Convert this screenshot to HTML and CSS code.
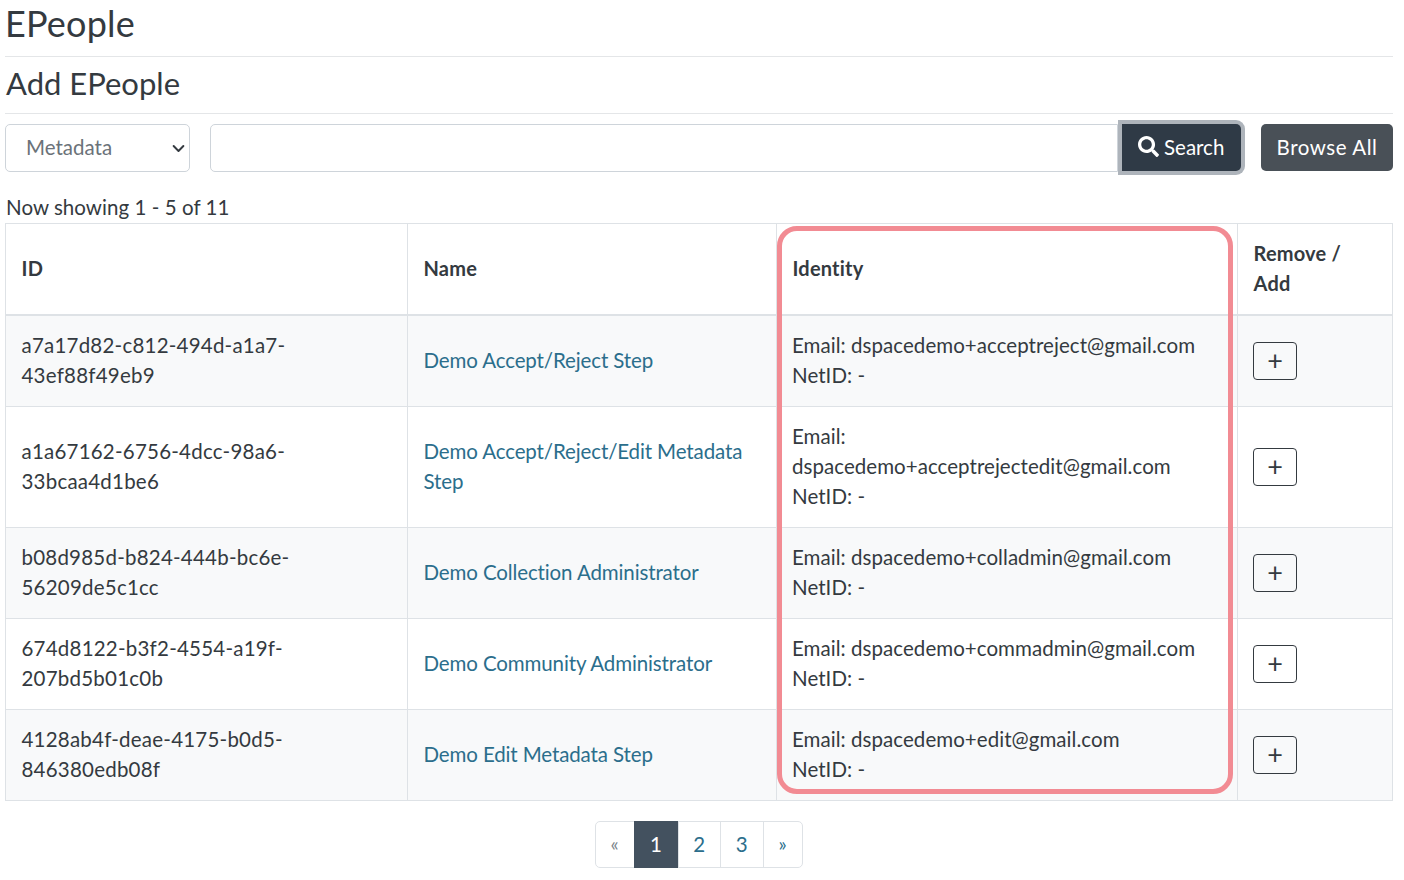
FILE: index.html
```html
<!DOCTYPE html>
<html lang="en">
<head>
<meta charset="utf-8">
<title>EPeople</title>
<link rel="stylesheet" href="styles.css">
</head>
<body>
<main class="page">
  <h1 class="title">EPeople</h1>
  <h2 class="subtitle">Add EPeople</h2>
  <form class="search">
    <div class="select"><span>Metadata</span>
      <svg class="chev" viewBox="0 0 16 16" width="13" height="13"><path d="M2 5l6 6 6-6" fill="none" stroke="#343a40" stroke-width="2.4" stroke-linecap="round" stroke-linejoin="round"/></svg>
    </div>
    <div class="group">
      <div class="input"></div>
      <button type="button" class="btn btn-search">
        <svg viewBox="0 0 512 512" width="21" height="21"><path fill="#fff" d="M505 442.700L405.300 343c-4.500-4.500-10.600-7-17-7H372c27.600-35.300 44-79.700 44-128C416 93.100 322.900 0 208 0S0 93.100 0 208s93.100 208 208 208c48.300 0 92.700-16.400 128-44v16.300c0 6.400 2.500 12.500 7 17l99.700 99.700c9.400 9.400 24.600 9.400 33.900 0l28.300-28.300c9.400-9.400 9.400-24.600.1-34zM208 336c-70.700 0-128-57.200-128-128 0-70.700 57.200-128 128-128 70.700 0 128 57.200 128 128 0 70.700-57.200 128-128 128z"/></svg>
        <span>Search</span>
      </button>
    </div>
    <button type="button" class="btn btn-browse"><span class="btn-label">Browse All</span></button>
  </form>
  <p class="count">Now showing 1 - 5 of 11</p>
  <div class="table-wrap">
    <table class="people">
      <colgroup><col class="c1"><col class="c2"><col class="c3"><col class="c4"></colgroup>
      <thead>
        <tr><th>ID</th><th>Name</th><th>Identity</th><th>Remove /<br>Add</th></tr>
      </thead>
      <tbody>
        <tr>
          <td class="uuid">a7a17d82-c812-494d-a1a7-<br>43ef88f49eb9</td>
          <td><a href="#">Demo Accept/Reject Step</a></td>
          <td class="identity">Email: dspacedemo+acceptreject@gmail.com<br>NetID: -</td>
          <td class="action"><button type="button" class="add">+</button></td>
        </tr>
        <tr>
          <td class="uuid">a1a67162-6756-4dcc-98a6-<br>33bcaa4d1be6</td>
          <td><a href="#">Demo Accept/Reject/Edit Metadata<br>Step</a></td>
          <td class="identity">Email:<br>dspacedemo+acceptrejectedit@gmail.com<br>NetID: -</td>
          <td class="action"><button type="button" class="add">+</button></td>
        </tr>
        <tr>
          <td class="uuid">b08d985d-b824-444b-bc6e-<br>56209de5c1cc</td>
          <td><a href="#">Demo Collection Administrator</a></td>
          <td class="identity">Email: dspacedemo+colladmin@gmail.com<br>NetID: -</td>
          <td class="action"><button type="button" class="add">+</button></td>
        </tr>
        <tr>
          <td class="uuid">674d8122-b3f2-4554-a19f-<br>207bd5b01c0b</td>
          <td><a href="#">Demo Community Administrator</a></td>
          <td class="identity">Email: dspacedemo+commadmin@gmail.com<br>NetID: -</td>
          <td class="action"><button type="button" class="add">+</button></td>
        </tr>
        <tr>
          <td class="uuid">4128ab4f-deae-4175-b0d5-<br>846380edb08f</td>
          <td><a href="#">Demo Edit Metadata Step</a></td>
          <td class="identity">Email: dspacedemo+edit@gmail.com<br>NetID: -</td>
          <td class="action"><button type="button" class="add">+</button></td>
        </tr>
      </tbody>
    </table>
    <div class="highlight"></div>
  </div>
  <nav class="pager">
    <a class="pg pg-edge" href="#">«</a>
    <a class="pg pg-active" href="#">1</a>
    <a class="pg pg-num" href="#">2</a>
    <a class="pg pg-num" href="#">3</a>
    <a class="pg pg-edge" href="#">»</a>
  </nav>
</main>
</body>
</html>
```
FILE: styles.css
```css
* { box-sizing: border-box; }
html, body { margin: 0; padding: 0; }
body {
  background: #fff;
  color: #343a40;
  font-family: Lato, "Noto Sans", sans-serif;
  font-size: 20.5px;
  line-height: 30px;
  overflow: hidden;
}
.page { width: 1393px; padding-left: 5px; }
.title {
  margin: 0;
  height: 57px;
  border-bottom: 1px solid #e4e6e8;
  font-size: 36px;
  font-weight: 400;
  line-height: 46px;
  letter-spacing: 0.2px;
}
.subtitle {
  margin: 0;
  height: 57px;
  padding: 5px 0 0 1px;
  border-bottom: 1px solid #e4e6e8;
  font-size: 31px;
  font-weight: 400;
  line-height: 42px;
}
.search { display: flex; align-items: flex-start; margin-top: 10px; }
.select {
  display: flex;
  align-items: center;
  justify-content: space-between;
  width: 185px;
  height: 48px;
  padding: 0 4px 2px 20px;
  border: 1px solid #ced4da;
  border-radius: 5px;
  color: #6b7279;
}
.chev { margin-top: 2px; }
.group { display: flex; flex: 1; margin-left: 20px; }
.input {
  flex: 1;
  height: 48px;
  border: 1px solid #ced4da;
  border-radius: 5px 0 0 5px;
}
.btn {
  height: 47px;
  border: 0;
  border-radius: 5px;
  color: #fff;
  font: inherit;
  white-space: nowrap;
}
.btn-label { position: relative; top: -1px; }
.btn-search {
  display: flex;
  align-items: center;
  gap: 5px;
  width: 119px;
  margin: 0 0 0 4px;
  padding: 0 0 2px 16px;
  background: #2f3a46;
  border-radius: 0 5px 5px 0;
  box-shadow: 0 0 0 4px #aeb4bb;
}
.btn-browse { width: 132px; margin-left: 20px; background: #495057; letter-spacing: 0.55px; }
.count { margin: 20px 0 0; height: 30px; padding-left: 1px; letter-spacing: 0.05px; }
.table-wrap { position: relative; margin-top: 1px; }
.people {
  width: 1388px;
  table-layout: fixed;
  border-collapse: collapse;
  border: 1px solid #dee2e6;
}
.c1 { width: 402px; }
.c2 { width: 369px; }
.c3 { width: 461px; }
.c4 { width: 155px; }
.people th, .people td {
  border: 1px solid #dee2e6;
  padding: 14px 15px 16px 15.5px;
  text-align: left;
  vertical-align: middle;
}
.people th { font-weight: 700; font-size: 20px; letter-spacing: 0.2px; }
.people thead th { border-bottom-width: 2px; }
.people tbody tr { background: #f8f9fa; }
.people tbody tr:nth-child(even) { background: #fff; }
.people a { color: #2b6e8c; text-decoration: none; letter-spacing: -0.12px; }
.uuid { letter-spacing: 0.22px; }
.people .identity { padding-left: 15px; letter-spacing: 0.05px; }
.people .action { padding-left: 15px; }
.add {
  display: block;
  width: 44px;
  height: 38px;
  margin-top: 1px;
  margin-bottom: -1px;
  padding: 0 0 3px;
  background: transparent;
  border: 1px solid #343a40;
  border-radius: 4px;
  color: #343a40;
  font: 400 27px/30px Lato, sans-serif;
}
.highlight {
  position: absolute;
  left: 772px;
  top: 3px;
  width: 456px;
  height: 568px;
  border: 5px solid #f28b93;
  border-radius: 20px;
  pointer-events: none;
}
.pager {
  display: flex;
  justify-content: center;
  width: 1388px;
  margin-top: 20px;
}
.pg {
  display: flex;
  align-items: center;
  justify-content: center;
  height: 47px;
  padding-bottom: 2px;
  border: 1px solid #dee2e6;
  margin-left: -1px;
  color: #2b6e8c;
  text-decoration: none;
}
.pg-num { width: 43.5px; }
.pg-edge { width: 40px; color: #7b848c; font-size: 19px; }
.pg-edge:first-child { border-radius: 5px 0 0 5px; }
.pg-edge:last-child { border-radius: 0 5px 5px 0; color: #2b6e8c; }
.pg-active { width: 45px; background: #43515f; border-color: #43515f; color: #fff; }
```
